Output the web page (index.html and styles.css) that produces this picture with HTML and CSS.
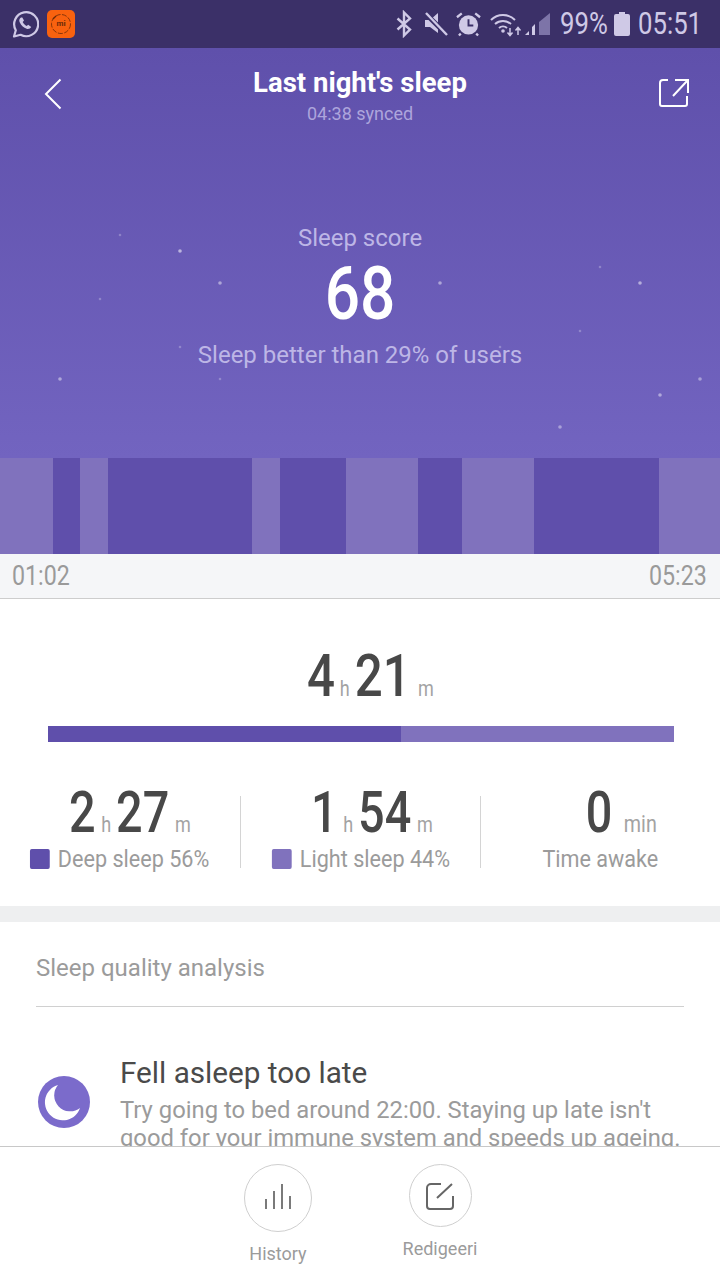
FILE: index.html
```html
<!DOCTYPE html>
<html>
<head>
  <meta charset="utf-8">
  <title>Last night's sleep</title>
  <link rel="stylesheet" href="styles.css">
</head>
<body>
  <div class="page">
    <div class="statusbar">
      <div class="status-left">
        <svg class="ic-whatsapp" width="28" height="30" viewBox="0 0 28 30">
          <path d="M3 27.500l1.800-6.300A12 12 0 1 1 9.600 25.800z" fill="none" stroke="#cfc9e6" stroke-width="2.200" stroke-linejoin="round"/>
          <path d="M10 8.500c-1.800 1-2.200 3-1.200 5 1.500 3.200 4 5.200 6.800 6.200 2 .6 3.800-.2 4.600-1.800l-3-2.200-1.500 1.300c-1.800-.8-3.200-2.200-4-4l1.300-1.500-1.700-3z" fill="#cfc9e6"/>
        </svg>
        <div class="mi-icon">
          <svg width="28" height="28" viewBox="0 0 28 28">
            <circle cx="14" cy="14" r="9.500" fill="none" stroke="#6b2a08" stroke-width=".8" stroke-dasharray="5 1.500"/>
            <path d="M6 9l3-3" stroke="#6b2a08" stroke-width="1.300"/>
          </svg>
          <span class="mi-text">mi</span>
        </div>
      </div>
      <div class="status-right">
        <svg width="16" height="28" viewBox="0 0 16 28"><path d="M1.500 8.500l12.500 11-6 6V2.500l6 6-12.500 11" fill="none" stroke="#cfc9e6" stroke-width="2.400"/></svg>
        <svg class="gap-mute" width="24" height="24" viewBox="0 0 24 24">
          <path d="M1 8h5l8-7v20l-8-6H1z" fill="#cfc9e6"/>
          <path d="M1 1l22 22" stroke="#3b3068" stroke-width="5"/>
          <path d="M2 1l21 22" stroke="#cfc9e6" stroke-width="2.400"/>
        </svg>
        <svg class="gap-alarm" width="25" height="26" viewBox="0 0 26 26">
          <circle cx="13" cy="14" r="10" fill="#cfc9e6"/>
          <path d="M13 8v6.500h5" fill="none" stroke="#3b3068" stroke-width="2"/>
          <path d="M1 6l5-4M25 6l-5-4M5 23l-2 2M21 23l2 2" stroke="#cfc9e6" stroke-width="2.400"/>
        </svg>
        <svg class="gap-wifi" width="60" height="26" viewBox="0 0 60 26">
          <path d="M1 9a17 17 0 0 1 24 0M5 13a12 12 0 0 1 16 0M9 17a6 6 0 0 1 8 0" fill="none" stroke="#cfc9e6" stroke-width="2"/>
          <circle cx="13" cy="20" r="1.800" fill="#cfc9e6"/>
          <path d="M20 17v7M17.500 21.500l2.500 3 2.500-3M28 24v-7M25.500 19.500l2.500-3 2.500 3" fill="none" stroke="#cfc9e6" stroke-width="1.500"/>
          <path d="M35 24l4-4v4zM42 24v-8l3-3v11z" fill="#cfc9e6"/>
          <path d="M49 24V11l11-9v22z" fill="#7d74a8"/>
        </svg>
        <span class="status-text status-pct">99%</span>
        <svg class="gap-batt" width="16" height="24" viewBox="0 0 16 24"><path d="M5 0h6v2h3a2 2 0 0 1 2 2v18a2 2 0 0 1-2 2H2a2 2 0 0 1-2-2V4a2 2 0 0 1 2-2h3z" fill="#cfc9e6"/></svg>
        <span class="status-text status-time">05:51</span>
      </div>
    </div>

    <div class="hero">
      <svg class="stars" width="720" height="410" viewBox="0 48 720 410">
        <circle cx="120" cy="235" r="1.300" opacity=".25"/>
        <circle cx="180" cy="251" r="1.800" opacity=".55"/>
        <circle cx="220" cy="283" r="1.800" opacity=".45"/>
        <circle cx="100" cy="299" r="1.300" opacity=".25"/>
        <circle cx="440" cy="283" r="1.800" opacity=".45"/>
        <circle cx="600" cy="267" r="1.300" opacity=".25"/>
        <circle cx="640" cy="283" r="1.800" opacity=".5"/>
        <circle cx="580" cy="331" r="1.300" opacity=".25"/>
        <circle cx="180" cy="347" r="1.300" opacity=".25"/>
        <circle cx="500" cy="347" r="1.300" opacity=".25"/>
        <circle cx="60" cy="379" r="1.800" opacity=".45"/>
        <circle cx="220" cy="379" r="1.300" opacity=".25"/>
        <circle cx="700" cy="379" r="1.800" opacity=".4"/>
        <circle cx="660" cy="395" r="1.800" opacity=".45"/>
        <circle cx="560" cy="427" r="1.800" opacity=".4"/>
      </svg>
      <div class="topbar">
        <svg class="back" width="20" height="32" viewBox="0 0 20 32"><path d="M16.500 1.500L2 16l14.500 14.500" fill="none" stroke="#fff" stroke-width="2"/></svg>
        <div class="topbar-title">
          <div class="title">Last night's sleep</div>
          <div class="synced">04:38 synced</div>
        </div>
        <svg class="share" width="30" height="30" viewBox="0 0 30 30">
          <path d="M9 2H4a3 3 0 0 0-3 3v21a2 2 0 0 0 2 2h23a2 2 0 0 0 2-2v-8M16 2h13v13M14 18L28 3" fill="none" stroke="#fff" stroke-width="2"/>
        </svg>
      </div>
      <div class="score">
        <div class="score-label">Sleep score</div>
        <div class="score-num">68</div>
        <div class="score-note">Sleep better than 29% of users</div>
      </div>
    </div>

    <div class="bars">
      <div class="seg light" style="width:53px"></div>
      <div class="seg deep" style="width:27px"></div>
      <div class="seg light" style="width:28px"></div>
      <div class="seg deep" style="width:144px"></div>
      <div class="seg light" style="width:28px"></div>
      <div class="seg deep" style="width:66px"></div>
      <div class="seg light" style="width:72px"></div>
      <div class="seg deep" style="width:44px"></div>
      <div class="seg light" style="width:72px"></div>
      <div class="seg deep" style="width:125px"></div>
      <div class="seg light" style="width:61px"></div>
    </div>

    <div class="times">
      <span class="time-start">01:02</span>
      <span class="time-end">05:23</span>
    </div>

    <div class="summary">
      <div class="total">
        <div class="total-inner">
          <span class="num-big">4</span><span class="unit-big">h</span><span class="num-big">21</span><span class="unit-big unit-big-m">m</span>
        </div>
      </div>
      <div class="ratio">
        <div class="ratio-deep" style="width:353px"></div>
        <div class="ratio-light"></div>
      </div>
      <div class="stats">
        <div class="stat">
          <div class="stat-val val-deep">
            <div class="stat-inner"><span class="num">2</span><span class="unit">h</span><span class="num">27</span><span class="unit">m</span></div>
          </div>
          <div class="stat-label"><div class="label-inner"><i class="swatch deep"></i>Deep sleep 56%</div></div>
        </div>
        <div class="stat stat-line">
          <div class="stat-val val-light">
            <div class="stat-inner"><span class="num">1</span><span class="unit">h</span><span class="num">54</span><span class="unit">m</span></div>
          </div>
          <div class="stat-label"><div class="label-inner"><i class="swatch light"></i>Light sleep 44%</div></div>
        </div>
        <div class="stat stat-line">
          <div class="stat-val val-awake">
            <div class="stat-inner"><span class="num">0</span><span class="unit unit-min">min</span></div>
          </div>
          <div class="stat-label"><div class="label-inner">Time awake</div></div>
        </div>
      </div>
    </div>

    <div class="band"></div>

    <div class="analysis">
      <div class="analysis-head">Sleep quality analysis</div>
      <div class="tip">
        <svg class="moon" width="52" height="52" viewBox="0 0 52 52">
          <circle cx="26" cy="26" r="26" fill="#7b6bcb"/>
          <path d="M20 9A18 18 0 1 0 42 32A16 16 0 0 1 20 9z" fill="#fff"/>
        </svg>
        <div class="tip-text">
          <div class="tip-title">Fell asleep too late</div>
          <div class="tip-body">Try going to bed around 22:00. Staying up late isn't<br>good for your immune system and speeds up ageing.</div>
        </div>
      </div>
    </div>

    <div class="footer">
      <div class="action action-history">
        <div class="round">
          <svg width="28" height="28" viewBox="0 0 28 28"><path d="M2 15v10M10 7v18M18 0v25M26 12v13" fill="none" stroke="#7a7a7a" stroke-width="2"/></svg>
        </div>
        <div class="action-label">History</div>
      </div>
      <div class="action action-edit">
        <div class="round round-s">
          <svg width="28" height="28" viewBox="0 0 28 28"><path d="M15 2H5a4 4 0 0 0-4 4v18a3 3 0 0 0 3 3h20a3 3 0 0 0 3-3V14M26 2L11 16" fill="none" stroke="#666" stroke-width="2"/></svg>
        </div>
        <div class="action-label">Redigeeri</div>
      </div>
    </div>
  </div>
</body>
</html>
```

FILE: styles.css
```css
* {
  box-sizing: border-box;
}

html, body {
  margin: 0;
  padding: 0;
  background: #fff;
}

body {
  font-family: Roboto, "Liberation Sans", sans-serif;
  color: #9b9b9b;
}

.page {
  position: relative;
  width: 720px;
  height: 1280px;
  overflow: hidden;
  display: flex;
  flex-direction: column;
}

/* status bar */
.statusbar {
  height: 48px;
  flex: none;
  background: #3b3068;
  display: flex;
  align-items: center;
  justify-content: space-between;
  padding: 0 18px 0 11px;
}

.status-left, .status-right {
  display: flex;
  align-items: center;
}

.mi-icon {
  position: relative;
  width: 28px;
  height: 28px;
  margin-left: 8px;
  border-radius: 5px;
  background: #f9620f;
}

.mi-icon svg {
  display: block;
}

.mi-text {
  position: absolute;
  left: 0;
  right: 0;
  top: 7px;
  text-align: center;
  font-size: 8px;
  line-height: 14px;
  font-weight: 700;
  color: #6b2a08;
}

.status-text {
  font-size: 31px;
  line-height: 48px;
  color: #cfc9e6;
  white-space: nowrap;
  transform: scaleX(.83);
  transform-origin: left center;
}

.status-pct {
  width: 47px;
  margin-left: 10px;
}

.status-time {
  width: 64px;
  margin-left: 8px;
}

.gap-mute {
  margin-left: 12px;
}

.gap-alarm {
  margin-left: 8px;
}

.gap-wifi {
  margin-left: 9px;
}

.gap-batt {
  margin-left: 7px;
}

/* hero */
.hero {
  position: relative;
  height: 410px;
  flex: none;
  background: linear-gradient(#5f50ab, #7264c0);
}

.stars {
  position: absolute;
  left: 0;
  top: 0;
  fill: #fff;
}

.topbar {
  position: relative;
  display: flex;
  justify-content: space-between;
  padding: 30px 31px 0 44px;
}

.topbar-title {
  position: absolute;
  left: 0;
  right: 0;
  top: 18px;
  text-align: center;
}

.title {
  font-size: 27.500px;
  line-height: 34px;
  font-weight: 700;
  color: #fff;
}

.synced {
  margin-top: 1px;
  font-size: 18px;
  line-height: 26px;
  color: #ada5dc;
}

.score {
  position: relative;
  margin-top: 112px;
  text-align: center;
}

.score-label, .score-note {
  font-size: 24px;
  line-height: 32px;
  color: #bdb6e6;
}

.score-num {
  margin-top: 4px;
  font-size: 74px;
  line-height: 72px;
  font-weight: 500;
  color: #fff;
  transform: scaleX(.84);
}

.score-note {
  margin-top: 9px;
}

/* sleep bars */
.bars {
  height: 96px;
  flex: none;
  display: flex;
}

.deep {
  background: #5f4fab;
}

.light {
  background: #8072bd;
}

.times {
  height: 45px;
  flex: none;
  display: flex;
  justify-content: space-between;
  align-items: center;
  padding: 0 12px;
  background: #f5f6f8;
  border-bottom: 1px solid #cdcdcd;
  font-size: 27px;
  color: #9a9a9a;
}

.time-start, .time-end {
  width: 59px;
  white-space: nowrap;
  transform: scaleX(.86);
  transform-origin: left center;
}

/* summary */
.summary {
  height: 307px;
  flex: none;
  padding: 45px 46px 0 48px;
}

.total {
  display: flex;
  justify-content: center;
  height: 82px;
  padding-left: 18px;
}

.total-inner {
  display: flex;
  align-items: baseline;
  height: 64px;
  transform: scaleX(.82);
}

.num-big {
  font-size: 60px;
  line-height: 64px;
  font-weight: 500;
  color: #484848;
}

.unit-big, .unit {
  font-size: 22px;
  color: #a3a3a3;
}

.unit-big {
  margin: 0 6px;
}

.unit-big-m {
  margin: 0 0 0 9px;
}

.ratio {
  display: flex;
  height: 16px;
}

.ratio-deep {
  background: #5f4fab;
}

.ratio-light {
  flex: 1;
  background: #8072bd;
}

.stats {
  display: flex;
  margin: 54px -46px 0 -48px;
}

.stat {
  width: 240px;
  height: 72px;
  text-align: center;
}

.stat-line {
  border-left: 1px solid #d4d4d4;
}

.stat-val {
  display: flex;
  justify-content: center;
  height: 57px;
  margin-top: -12px;
}

.val-deep {
  padding-left: 25px;
}

.val-light {
  padding-left: 27px;
}

.val-awake {
  padding-left: 42px;
}

.stat-inner {
  display: flex;
  align-items: baseline;
  height: 58px;
  transform: scaleX(.82);
}

.num {
  font-size: 57px;
  line-height: 58px;
  font-weight: 500;
  color: #484848;
}

.unit {
  margin: 0 6px 0 7px;
}

.unit-min {
  margin: 0 0 0 14px;
  font-size: 24px;
}

.stat-label {
  display: flex;
  justify-content: center;
  height: 36px;
  font-size: 24px;
  color: #9b9b9b;
}

.label-inner {
  display: flex;
  align-items: center;
  white-space: nowrap;
  transform: scaleX(.9);
}

.swatch {
  width: 22px;
  height: 20px;
  margin-right: 9px;
  border-radius: 2px;
}

.band {
  height: 16px;
  flex: none;
  background: #eeeff0;
}

/* analysis */
.analysis {
  flex: 1;
  min-height: 0;
  overflow: hidden;
  padding: 0 36px;
}

.analysis-head {
  height: 85px;
  padding-top: 28px;
  border-bottom: 1px solid #d0d0d0;
  font-size: 24px;
  line-height: 36px;
  color: #9b9b9b;
}

.tip {
  display: flex;
  padding-top: 47px;
}

.moon {
  flex: none;
  margin: 22px 30px 0 2px;
}

.tip-title {
  font-size: 29.700px;
  line-height: 38px;
  color: #4a4a4a;
}

.tip-body {
  margin-top: 4px;
  font-size: 23.800px;
  line-height: 28px;
  white-space: nowrap;
  color: #9b9b9b;
}

/* footer */
.footer {
  position: relative;
  height: 134px;
  flex: none;
  background: #fff;
  border-top: 1px solid #c8c8c8;
}

.action {
  position: absolute;
  width: 120px;
  text-align: center;
}

.action-history {
  left: 218px;
  top: 17px;
}

.action-edit {
  left: 380px;
  top: 17px;
}

.round {
  width: 68px;
  height: 68px;
  margin: 0 auto;
  border: 1px solid #cfcfcf;
  border-radius: 50%;
  display: flex;
  align-items: center;
  justify-content: center;
}

.round-s {
  width: 63px;
  height: 63px;
}

.action-label {
  margin-top: 10px;
  font-size: 18px;
  line-height: 24px;
  color: #9b9b9b;
}
```
